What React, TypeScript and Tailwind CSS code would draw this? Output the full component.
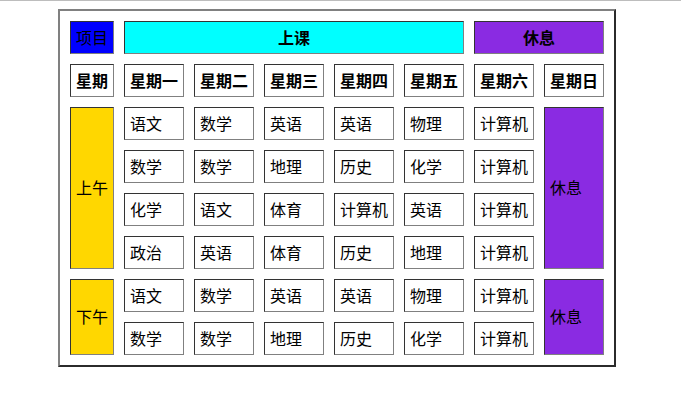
import React from "react";

const days = ["星期一", "星期二", "星期三", "星期四", "星期五", "星期六", "星期日"];

const morning = [
  ["语文", "数学", "英语", "英语", "物理", "计算机"],
  ["数学", "数学", "地理", "历史", "化学", "计算机"],
  ["化学", "语文", "体育", "计算机", "英语", "计算机"],
  ["政治", "英语", "体育", "历史", "地理", "计算机"],
];

const afternoon = [
  ["语文", "数学", "英语", "英语", "物理", "计算机"],
  ["数学", "数学", "地理", "历史", "化学", "计算机"],
];

const cell =
  "border border-t-[#333333] border-l-[#333333] border-r-[#808080] border-b-[#808080] flex items-center pb-[2px]";

function Cell({ text, className = "" }: { text: string; className?: string }) {
  return <div className={`${cell} pl-[5px] ${className}`}>{text}</div>;
}

export default function App() {
  return (
    <div
      className="text-[16px] leading-none text-black"
      style={{ fontFamily: '"Noto Sans CJK SC", "Noto Sans", sans-serif' }}
    >
      <div className="h-px bg-[#bdbdbd]" />
      <div className="ml-[58px] mt-[8px] w-[558px] border-2 border-t-[#808080] border-l-[#808080] border-r-[#2b2b2b] border-b-[#2b2b2b] p-[10px]">
        <div className="grid grid-cols-[44px_repeat(7,60px)] auto-rows-[33px] gap-[10px]">
          {/* header */}
          <div className={`${cell} justify-center bg-[#0000ff]`}>项目</div>
          <div className={`${cell} col-span-5 justify-center font-bold bg-[#00ffff]`}>上课</div>
          <div className={`${cell} col-span-2 justify-center font-bold bg-[#8a2be2]`}>休息</div>

          <div className={`${cell} justify-center font-bold`}>星期</div>
          {days.map((d) => (
            <div key={d} className={`${cell} justify-center font-bold`}>
              {d}
            </div>
          ))}

          {/* morning */}
          <div className={`${cell} row-span-4 justify-center bg-[#ffd700]`}>上午</div>
          {morning[0].map((s, i) => (
            <Cell key={"m0" + i} text={s} />
          ))}
          <div className={`${cell} row-span-4 pl-[5px] bg-[#8a2be2]`}>休息</div>
          {morning.slice(1).flatMap((row, r) =>
            row.map((s, i) => <Cell key={`m${r + 1}-${i}`} text={s} />)
          )}

          {/* afternoon */}
          <div className={`${cell} row-span-2 justify-center bg-[#ffd700]`}>下午</div>
          {afternoon[0].map((s, i) => (
            <Cell key={"a0" + i} text={s} />
          ))}
          <div className={`${cell} row-span-2 pl-[5px] bg-[#8a2be2]`}>休息</div>
          {afternoon[1].map((s, i) => (
            <Cell key={"a1" + i} text={s} />
          ))}
        </div>
      </div>
    </div>
  );
}
